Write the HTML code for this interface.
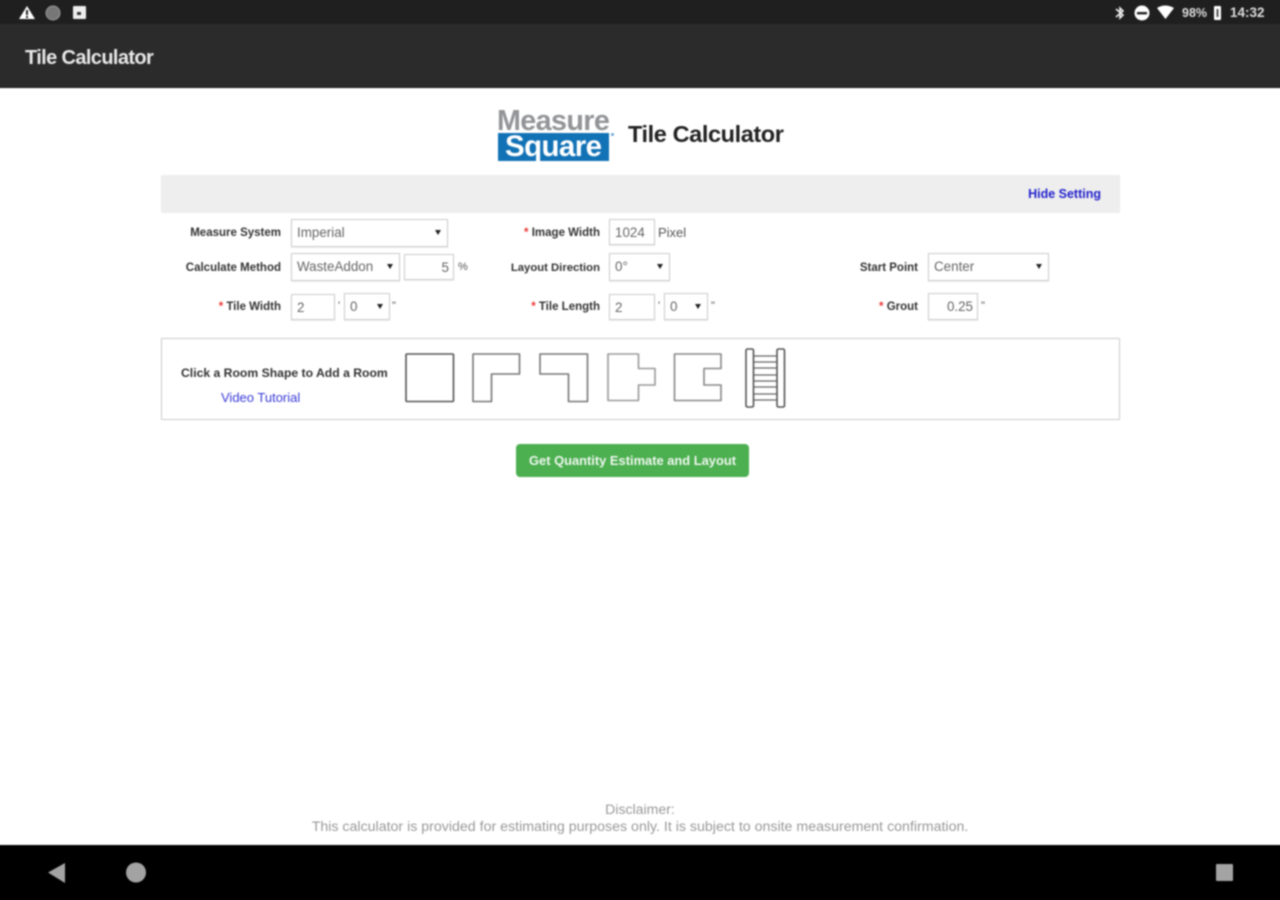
<!DOCTYPE html>
<html><head><meta charset="utf-8"><title>Tile Calculator</title>
<style>
html,body{margin:0;padding:0;width:1280px;height:900px;overflow:hidden;background:#fff;font-family:"Liberation Sans",sans-serif}
.a{position:absolute;white-space:nowrap}
#clip{position:absolute;left:0;top:0;width:1280px;height:900px;overflow:hidden}
#root{position:absolute;left:0;top:0;width:1280px;height:900px;filter:blur(.7px)}
.lb{font-size:11.5px;font-weight:bold;color:#333;text-align:right;line-height:14px;height:14px;margin-top:1px}
.lb i{font-style:normal;color:#e33}
.box{position:absolute;box-sizing:border-box;border:1px solid #ccc;background:#fff;font-size:13.4px;color:#666;line-height:25px;padding-left:5px;box-shadow:0 1px 1px rgba(0,0,0,.08)}
.box.r{text-align:right;padding:0 4px 0 0}
.box b{position:absolute;right:6px;top:10px;width:0;height:0;border-left:3px solid transparent;border-right:3px solid transparent;border-top:5px solid #222}
.u{font-size:11px;color:#555;line-height:14px}
svg{position:absolute}
</style></head><body>
<div id="clip">
<div id="root">
<div class="a" style="left:-6px;top:-6px;width:1292px;height:30px;background:#1f1f1f"></div>
<div class="a" style="left:-6px;top:24px;width:1292px;height:63px;background:#2b2b2b"></div>
<div class="a" style="left:-6px;top:87px;width:1292px;height:1px;background:#1a1a1a"></div>
<svg style="left:0;top:0" width="1280" height="24">
<path d="M27 6 L35 19 H19 Z" fill="#fff"/><rect x="26" y="10" width="2" height="5" fill="#222"/><rect x="26" y="16" width="2" height="2" fill="#222"/>
<circle cx="53" cy="13" r="7" fill="#777" stroke="#999"/>
<rect x="73" y="6" width="13" height="13" rx="1" fill="#eee"/><rect x="77" y="12" width="4" height="3" fill="#333"/>
<path d="M1116 9 L1123 15 L1120 18 V8 L1123 11 L1116 17" fill="none" stroke="#eee" stroke-width="1.6"/>
<circle cx="1142" cy="13" r="7.5" fill="#fff"/><rect x="1137" y="12" width="10" height="2.4" fill="#222"/>
<path d="M1157 8 Q1165 3 1174 8 L1165.500 19 Z" fill="#fff"/>
<rect x="1214" y="6" width="7" height="14" rx="1" fill="#fff"/><rect x="1216.500" y="9" width="2" height="8" fill="#555"/>
</svg>
<div class="a" style="left:1182px;top:6px;font-size:12.500px;font-weight:bold;color:#ddd;line-height:14px">98%</div>
<div class="a" style="left:1230px;top:6px;font-size:13.500px;font-weight:bold;color:#ddd;line-height:14px">14:32</div>
<div class="a" style="left:25px;top:46px;font-size:20px;font-weight:bold;color:#e8e8e8;line-height:24px;letter-spacing:-.62px">Tile Calculator</div>

<div class="a" style="left:497px;top:105px;font-size:28.700px;font-weight:bold;color:#929497;line-height:32px;letter-spacing:-.6px">Measure</div>
<div class="a" style="left:498px;top:133px;width:111px;height:28px;background:#1272b6"></div>
<div class="a" style="left:505px;top:131px;font-size:29.500px;font-weight:bold;color:#fff;line-height:32px;letter-spacing:-.6px">Square</div>
<div class="a" style="left:611px;top:133px;width:3px;height:3px;border-radius:50%;background:#6aa6d6"></div>
<div class="a" style="left:628px;top:120px;font-size:23.500px;font-weight:bold;color:#222;line-height:29px;letter-spacing:-.4px">Tile Calculator</div>

<div class="a" style="left:161px;top:175px;width:959px;height:38px;background:#eee"></div>
<div class="a" style="right:179px;top:187px;font-size:12.500px;font-weight:bold;color:#2222cc;line-height:14px">Hide Setting</div>

<div class="a lb" style="right:999px;top:225px">Measure System</div>
<div class="box" style="left:291px;top:219px;width:157px;height:28px">Imperial<b></b></div>
<div class="a lb" style="right:999px;top:260px">Calculate Method</div>
<div class="box" style="left:291px;top:253px;width:109px;height:28px">WasteAddon<b></b></div>
<div class="box r" style="left:404px;top:254px;width:50px;height:26px">5</div>
<div class="a u" style="left:458px;top:260px">%</div>
<div class="a lb" style="right:999px;top:299px"><i>*</i> Tile Width</div>
<div class="box" style="left:291px;top:294px;width:44px;height:26px">2</div>
<div class="a u" style="left:338px;top:299px">'</div>
<div class="box" style="left:344px;top:293px;width:46px;height:27px">0<b></b></div>
<div class="a u" style="left:392px;top:299px">"</div>

<div class="a lb" style="right:680px;top:225px"><i>*</i> Image Width</div>
<div class="box" style="left:609px;top:219px;width:46px;height:26px">1024</div>
<div class="a u" style="left:658px;top:226px;font-size:13px">Pixel</div>
<div class="a lb" style="right:680px;top:260px;font-size:11.300px">Layout Direction</div>
<div class="box" style="left:609px;top:253px;width:61px;height:28px">0°<b></b></div>
<div class="a lb" style="right:680px;top:299px"><i>*</i> Tile Length</div>
<div class="box" style="left:609px;top:294px;width:46px;height:26px">2</div>
<div class="a u" style="left:658px;top:299px">'</div>
<div class="box" style="left:664px;top:293px;width:44px;height:27px">0<b></b></div>
<div class="a u" style="left:711px;top:299px">"</div>

<div class="a lb" style="right:362px;top:260px">Start Point</div>
<div class="box" style="left:928px;top:253px;width:121px;height:28px">Center<b></b></div>
<div class="a lb" style="right:362px;top:299px"><i>*</i> Grout</div>
<div class="box r" style="left:928px;top:293px;width:50px;height:27px">0.25</div>
<div class="a u" style="left:981px;top:299px">"</div>

<div class="a" style="left:161px;top:338px;width:959px;height:82px;box-sizing:border-box;border:1.5px solid #ccc"></div>
<div class="a" style="left:181px;top:366px;font-size:12.200px;font-weight:bold;color:#333;line-height:14px">Click a Room Shape to Add a Room</div>
<div class="a" style="left:221px;top:391px;font-size:13px;color:#3a3ad8;line-height:14px">Video Tutorial</div>

<svg style="left:0;top:340px" width="1280" height="80" viewBox="0 340 1280 80" fill="#fff" stroke="#666" stroke-width="1.6" stroke-linejoin="round">
<rect x="406" y="354" width="47.500" height="47.500" rx="1" stroke="#555"/>
<path d="M473 354 H519.500 V374 H491.500 V401.500 H473 Z" stroke="#777"/>
<path d="M540 354 H587.500 V401.500 H568.500 V374 H540 Z" stroke="#777"/>
<path d="M608 354 H638.500 V368.500 H655 V385 H638.500 V400.500 H608 Z" stroke="#999"/>
<path d="M674.500 354 H721 V368.500 H704 V385 H721 V400.500 H674.500 Z" stroke="#888"/>
<path d="M753 356 H778 M753 362 H778 M753 368 H778 M753 375 H778 M753 381 H778 M753 387 H778 M753 394 H778 M753 400 H778" stroke="#666" stroke-width="1.300"/>
<rect x="746" y="349" width="7.500" height="58" rx="1.500" stroke="#555"/>
<rect x="777" y="349" width="7.500" height="58" rx="1.500" stroke="#555"/>
</svg>

<div class="a" style="left:516px;top:444px;width:233px;height:33px;background:#4caf50;border-radius:4px;color:#eef7ee;font-size:12.900px;font-weight:bold;line-height:33px;text-align:center">Get Quantity Estimate and Layout</div>

<div class="a" style="left:0;width:1280px;top:801px;text-align:center;font-size:14.100px;color:#999;line-height:16px">Disclaimer:</div>
<div class="a" style="left:0;width:1280px;top:819px;text-align:center;font-size:14.200px;color:#999;line-height:16px">This calculator is provided for estimating purposes only. It is subject to onsite measurement confirmation.</div>

<div class="a" style="left:-6px;top:845px;width:1292px;height:61px;background:#000"></div>
<svg style="left:0;top:845px" width="1280" height="55" viewBox="0 845 1280 55">
<path d="M48 872.500 L65 863 V883 Z" fill="#a3a3a3"/>
<circle cx="136" cy="872.500" r="10" fill="#a3a3a3"/>
<rect x="1216" y="864" width="17" height="17" rx="1" fill="#a3a3a3"/>
</svg>
</div>
</div>
</body></html>
